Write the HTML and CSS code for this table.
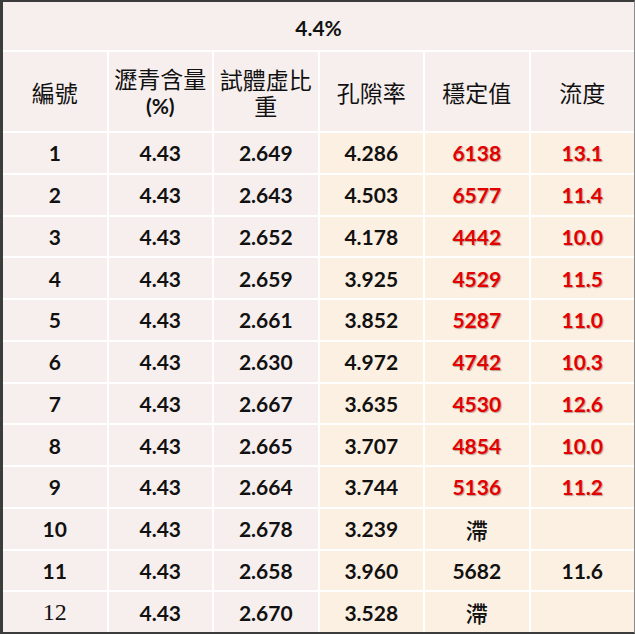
FILE: index.html
```
<!DOCTYPE html>
<html lang="zh-Hant">
<head>
<meta charset="utf-8">
<link rel="stylesheet" href="styles.css">
</head>
<body>
<div class="sheet">
  <div class="cell title num">4.4%</div>

  <div class="cell head"><span class="label">編號</span></div>
  <div class="cell head"><span class="label">瀝青含量<br><span class="pct">(%)</span></span></div>
  <div class="cell head"><span class="label">試體虛比重</span></div>
  <div class="cell head"><span class="label">孔隙率</span></div>
  <div class="cell head"><span class="label">穩定值</span></div>
  <div class="cell head"><span class="label">流度</span></div>

  <div class="cell num">1</div><div class="cell num">4.43</div><div class="cell num">2.649</div><div class="cell num warm">4.286</div><div class="cell num warm red">6138</div><div class="cell num warm red">13.1</div>
  <div class="cell num">2</div><div class="cell num">4.43</div><div class="cell num">2.643</div><div class="cell num warm">4.503</div><div class="cell num warm red">6577</div><div class="cell num warm red">11.4</div>
  <div class="cell num">3</div><div class="cell num">4.43</div><div class="cell num">2.652</div><div class="cell num warm">4.178</div><div class="cell num warm red">4442</div><div class="cell num warm red">10.0</div>
  <div class="cell num">4</div><div class="cell num">4.43</div><div class="cell num">2.659</div><div class="cell num warm">3.925</div><div class="cell num warm red">4529</div><div class="cell num warm red">11.5</div>
  <div class="cell num">5</div><div class="cell num">4.43</div><div class="cell num">2.661</div><div class="cell num warm">3.852</div><div class="cell num warm red">5287</div><div class="cell num warm red">11.0</div>
  <div class="cell num">6</div><div class="cell num">4.43</div><div class="cell num">2.630</div><div class="cell num warm">4.972</div><div class="cell num warm red">4742</div><div class="cell num warm red">10.3</div>
  <div class="cell num">7</div><div class="cell num">4.43</div><div class="cell num">2.667</div><div class="cell num warm">3.635</div><div class="cell num warm red">4530</div><div class="cell num warm red">12.6</div>
  <div class="cell num">8</div><div class="cell num">4.43</div><div class="cell num">2.665</div><div class="cell num warm">3.707</div><div class="cell num warm red">4854</div><div class="cell num warm red">10.0</div>
  <div class="cell num">9</div><div class="cell num">4.43</div><div class="cell num">2.664</div><div class="cell num warm">3.744</div><div class="cell num warm red">5136</div><div class="cell num warm red">11.2</div>
  <div class="cell num">10</div><div class="cell num">4.43</div><div class="cell num">2.678</div><div class="cell num warm">3.239</div><div class="cell warm cjk">滯</div><div class="cell warm"></div>
  <div class="cell num">11</div><div class="cell num">4.43</div><div class="cell num">2.658</div><div class="cell num warm">3.960</div><div class="cell num warm">5682</div><div class="cell num warm">11.6</div>
  <div class="cell serif">12</div><div class="cell num">4.43</div><div class="cell num">2.670</div><div class="cell num warm">3.528</div><div class="cell warm cjk">滯</div><div class="cell warm"></div>
</div>
</body>
</html>
```
FILE: styles.css
```
html, body {
  margin: 0;
  padding: 0;
  background: #ffffff;
}

.sheet {
  box-sizing: border-box;
  width: 635px;
  height: 634px;
  border: 2px solid #3c3c3c;
  border-left-width: 3px;
  border-right-color: #8a8a8a;
  border-right-width: 1px;
  background: #ffffff;
  display: grid;
  grid-template-columns: repeat(6, 1fr);
  grid-template-rows: 48px 79px repeat(12, 1fr);
  gap: 2px;
}

.cell {
  background: #f7efee;
  display: flex;
  align-items: center;
  justify-content: center;
  text-align: center;
  color: #111111;
  font-family: "Noto Sans CJK TC", sans-serif;
}

.warm {
  background: #fcf0e2;
}

.title {
  grid-column: 1 / -1;
  padding-top: 2px;
}

.num {
  font-family: Lato, "Open Sans", sans-serif;
  font-weight: 700;
  font-size: 21px;
}

.head {
  font-size: 23px;
  line-height: 26px;
  font-weight: 400;
  padding: 0 3px;
}

.label {
  display: block;
}

.pct {
  font-family: Lato, "Open Sans", sans-serif;
  font-weight: 700;
  font-size: 21px;
}

.red {
  color: #e30000;
  text-shadow: 1px 1px 1px rgba(60, 0, 0, 0.35);
}

.cjk {
  font-size: 22px;
  font-weight: 500;
}

.serif {
  font-family: "Liberation Serif", serif;
  font-size: 24px;
  font-weight: 400;
}
```
